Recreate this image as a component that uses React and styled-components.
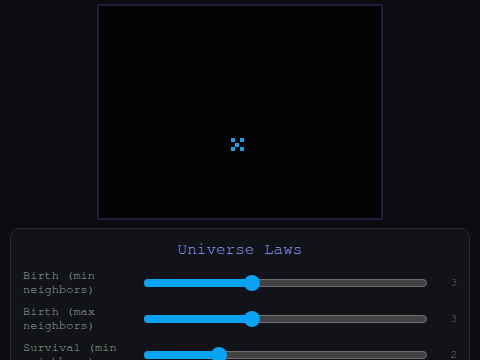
import React, { useState } from "react";
import styled, { createGlobalStyle } from "styled-components";

const GlobalStyle = createGlobalStyle`
  html, body {
    margin: 0;
    padding: 0;
    background: #0c0c10;
    overflow: hidden;
  }
  body {
    font-family: "Nimbus Mono PS", "Nimbus Mono L", FreeMono, "Courier 10 Pitch", "Liberation Mono", monospace;
  }
`;

const Page = styled.div`
  display: flex;
  flex-direction: column;
  align-items: center;
  gap: 8px;
  padding: 4px 10px;
`;

const Board = styled.div`
  width: 282px;
  height: 212px;
  border: 2px solid #20203a;
  border-radius: 2px;
  background: #030305;
  display: flex;
`;

const Panel = styled.div`
  align-self: stretch;
  background: #121219;
  border: 1px solid #2a2a34;
  border-radius: 9px;
  padding: 11px 12px 12px;
  display: flex;
  flex-direction: column;
  gap: 11px;
`;

const Title = styled.h2`
  margin: 0;
  text-align: center;
  font-size: 16px;
  font-weight: normal;
  line-height: 18px;
  color: #8c9ef8;
`;

const Laws = styled.div`
  display: flex;
  flex-direction: column;
  gap: 8px;
`;

const LawRow = styled.div`
  display: grid;
  grid-template-columns: 111px 1fr 20px;
  column-gap: 10px;
  align-items: center;
  min-height: 28px;
`;

const Label = styled.div`
  margin-top: -2px;
  font-size: 12px;
  line-height: 14px;
  color: #9aac9a;
`;

const Track = styled.div`
  position: relative;
  height: 8px;
  box-sizing: border-box;
  border: 1px solid #6e6e6e;
  border-radius: 4px;
  background: #434343;
  cursor: pointer;
`;

const Fill = styled.div`
  position: absolute;
  left: -1px;
  top: -1px;
  bottom: -1px;
  border-radius: 4px;
  background: #0aa2f2;
`;

const Knob = styled.div`
  position: absolute;
  top: 50%;
  width: 16px;
  height: 16px;
  margin-left: -8px;
  margin-top: -8px;
  border-radius: 50%;
  background: #0aa2f2;
`;

const Value = styled.span`
  margin-top: -2px;
  text-align: right;
  font-size: 11px;
  color: #747474;
`;

const laws = [
  { id: "birthMin", label: "Birth (min neighbors)", value: 3 },
  { id: "birthMax", label: "Birth (max neighbors)", value: 3 },
  { id: "survMin", label: "Survival (min neighbors)", value: 2 },
  { id: "survMax", label: "Survival (max neighbors)", value: 3 },
];

const glider = [
  [28, 28],
  [30, 28],
  [29, 29],
  [28, 30],
  [30, 30],
];

function Slider({ value, max }) {
  // thumb travels inside the track, like a native range input
  const frac = value / max;
  const pos = `calc(8px + ${frac} * (100% - 16px))`;
  return (
    <Track role="slider" aria-valuenow={value} aria-valuemax={max}>
      <Fill style={{ width: pos }} />
      <Knob style={{ left: pos }} />
    </Track>
  );
}

export default function App() {
  const [rules] = useState(laws);

  return (
    <Page>
      <GlobalStyle />
      <Board>
        <svg
          width="282"
          height="212"
          viewBox="0 0 60 45"
          preserveAspectRatio="none"
          shapeRendering="crispEdges"
        >
          {glider.map(([x, y]) => (
            <rect
              key={`${x}-${y}`}
              x={x}
              y={y}
              width="0.86"
              height="0.86"
              fill="#1c9fe4"
            />
          ))}
        </svg>
      </Board>
      <Panel>
        <Title>Universe Laws</Title>
        <Laws>
          {rules.map((r) => (
            <LawRow key={r.id}>
              <Label>{r.label}</Label>
              <Slider value={r.value} max={8} />
              <Value>{r.value}</Value>
            </LawRow>
          ))}
        </Laws>
      </Panel>
    </Page>
  );
}
